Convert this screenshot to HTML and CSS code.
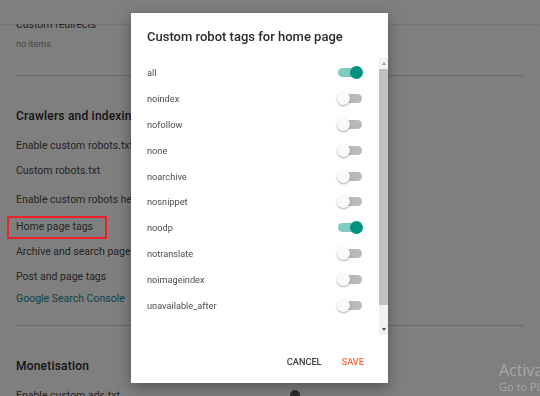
FILE: index.html
```html
<!DOCTYPE html>
<html lang="en">
<head>
  <meta charset="UTF-8">
  <meta name="viewport" content="width=device-width, initial-scale=1.0">
  <title>Settings</title>
  <link rel="stylesheet" href="styles.css">
</head>
<body>
  <div class="topbar"></div>

  <main class="settings">
    <div class="redirects">Custom redirects</div>
    <div class="sub">no items</div>
    <hr class="divider">

    <h2 class="section-title">Crawlers and indexing</h2>
    <div class="item">Enable custom robots.txt</div>
    <div class="item">Custom robots.txt</div>
    <div class="item gap">Enable custom robots header tags</div>
    <div class="item marked">Home page tags</div>
    <div class="item">Archive and search page tags</div>
    <div class="item">Post and page tags</div>
    <div class="item link">Google Search Console</div>
    <hr class="divider second">

    <h2 class="section-title">Monetisation</h2>
    <div class="item row">Enable custom ads.txt <span class="bg-toggle"></span></div>
  </main>

  <div class="overlay"></div>

  <div class="dialog">
    <h1 class="dialog-title">Custom robot tags for home page</h1>
    <div class="dialog-body">
      <ul class="tag-list">
        <li><span>all</span><span class="toggle on"></span></li>
        <li><span>noindex</span><span class="toggle"></span></li>
        <li><span>nofollow</span><span class="toggle"></span></li>
        <li><span>none</span><span class="toggle"></span></li>
        <li><span>noarchive</span><span class="toggle"></span></li>
        <li><span>nosnippet</span><span class="toggle"></span></li>
        <li><span>noodp</span><span class="toggle on"></span></li>
        <li><span>notranslate</span><span class="toggle"></span></li>
        <li><span>noimageindex</span><span class="toggle"></span></li>
        <li><span>unavailable_after</span><span class="toggle"></span></li>
      </ul>
      <div class="scrollbar">
        <span class="arrow up"></span>
        <span class="thumb"></span>
        <span class="arrow down"></span>
      </div>
    </div>
    <div class="dialog-actions">
      <button class="btn">Cancel</button>
      <button class="btn primary">Save</button>
    </div>
  </div>

  <div class="watermark">
    <div class="wm-big">Activate Windows</div>
    <div class="wm-small">Go to PC settings to activate Windows.</div>
  </div>
</body>
</html>
```

FILE: styles.css
```css
html, body {
  margin: 0;
  height: 100%;
  overflow: hidden;
}
body {
  font-family: Roboto, "Noto Sans", Arial, sans-serif;
  background: #fff;
  color: #212121;
}
.topbar {
  position: fixed;
  top: 0;
  left: 0;
  right: 0;
  height: 24px;
  background: #fff;
  box-shadow: 0 1px 2px rgba(0, 0, 0, 0.12);
  z-index: 1;
}
.settings {
  padding: 17px 16px 0;
}
.redirects {
  font-size: 10.5px;
  line-height: 16px;
  color: #4a4a4a;
}
.sub {
  font-size: 9px;
  line-height: 14px;
  color: #8a8a8a;
  margin-top: 4px;
}
.item {
  font-size: 10.5px;
  line-height: 25px;
  color: #4a4a4a;
  white-space: nowrap;
}
.item.gap {
  margin-top: 4px;
}
.divider {
  border: 0;
  border-top: 1px solid #d6d6d6;
  margin: 24px 0 0;
}
.divider.second {
  margin-top: 14px;
}
.section-title {
  font-size: 12px;
  font-weight: 500;
  color: #2a2a2a;
  letter-spacing: 0.2px;
  line-height: 18px;
  margin: 31px 0 8px;
}
.link {
  color: #1a8a90;
  margin-top: -3px;
}
.marked {
  position: relative;
  margin-top: 2px;
}
.marked::after {
  content: "";
  position: absolute;
  left: -9px;
  top: 2px;
  width: 100px;
  height: 23px;
  box-sizing: border-box;
  border: 2px solid #f0202a;
  z-index: 3;
}
.row {
  display: flex;
  align-items: center;
  width: 284px;
}
.bg-toggle {
  margin-left: auto;
  width: 10px;
  height: 12px;
  border-radius: 6px;
  background: #555;
}
.overlay {
  position: fixed;
  inset: 0;
  background: rgba(0, 0, 0, 0.5);
  z-index: 2;
}

/* dialog */
.dialog {
  position: fixed;
  left: 131px;
  top: 13px;
  width: 257px;
  height: 370px;
  background: #fff;
  z-index: 4;
  display: flex;
  flex-direction: column;
  box-shadow: 0 4px 14px rgba(0, 0, 0, 0.35);
}
.dialog-title {
  margin: 0;
  padding: 16px 16px 0;
  font-size: 13px;
  font-weight: 500;
  line-height: 16px;
  color: #2b2b2b;
}
.dialog-body {
  margin-top: 13px;
  height: 277px;
  display: flex;
}
.tag-list {
  list-style: none;
  margin: 0;
  padding: 2px 17px 0 16px;
  flex: 1;
}
.tag-list li {
  height: 25.8px;
  display: flex;
  align-items: center;
  justify-content: space-between;
  font-size: 9.2px;
  color: #4d4d4d;
}
.toggle {
  position: relative;
  width: 24px;
  height: 9px;
  border-radius: 5px;
  background: #b9b9b9;
}
.toggle::after {
  content: "";
  position: absolute;
  left: -1px;
  top: -2px;
  width: 13px;
  height: 13px;
  border-radius: 50%;
  background: #fafafa;
  box-shadow: 0 1px 2px rgba(0, 0, 0, 0.35);
}
.toggle.on {
  background: #7fcbc3;
}
.toggle.on::after {
  left: auto;
  right: -1px;
  background: #00917f;
  box-shadow: none;
}
.scrollbar {
  width: 9px;
  background: #f1f1f1;
  display: flex;
  flex-direction: column;
  align-items: center;
}
.arrow {
  width: 0;
  height: 0;
  border-left: 2.5px solid transparent;
  border-right: 2.5px solid transparent;
  margin: 4px 0;
}
.arrow.up {
  border-bottom: 3px solid #a3a3a3;
}
.arrow.down {
  border-top: 3px solid #505050;
  margin-top: auto;
  margin-bottom: 4px;
}
.thumb {
  width: 9px;
  height: 236px;
  background: #c1c1c1;
}
.dialog-actions {
  margin-top: auto;
  display: flex;
  justify-content: flex-end;
  gap: 20px;
  padding: 0 24px 14px 0;
}
.btn {
  background: none;
  border: none;
  padding: 0;
  font-family: Roboto, Arial, sans-serif;
  font-size: 9.2px;
  font-weight: 500;
  text-transform: uppercase;
  color: #3d3d3d;
  line-height: 14px;
  cursor: pointer;
}
.btn.primary {
  color: #ff6a3d;
}

.watermark {
  position: fixed;
  left: 499px;
  top: 361px;
  z-index: 5;
  white-space: nowrap;
  color: rgba(255, 255, 255, 0.3);
  font-family: "Open Sans", "Noto Sans", sans-serif;
}
.wm-big {
  font-size: 16px;
  line-height: 18px;
}
.wm-small {
  font-size: 11px;
  line-height: 15px;
}
```
